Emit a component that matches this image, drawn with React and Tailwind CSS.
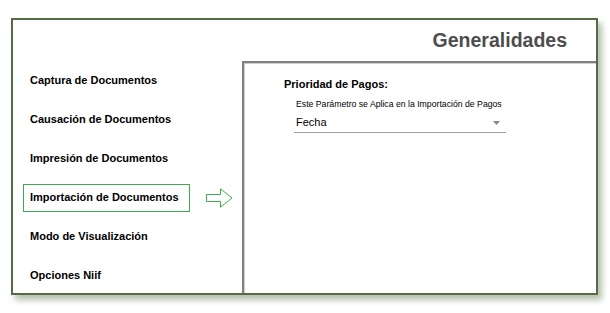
import React from "react";

const items = [
  "Captura de Documentos",
  "Causación de Documentos",
  "Impresión de Documentos",
  "Importación de Documentos",
  "Modo de Visualización",
  "Opciones Niif",
];

export default function App() {
  return (
    <div className="w-[610px] h-[313px] bg-white pt-[18px] pl-[11px]" style={{ fontFamily: '"Liberation Sans", Arial, sans-serif' }}>
      <div className="w-[587px] h-[277px] border-2 border-[#566b44] bg-white shadow-[4px_5px_6px_rgba(90,120,70,0.45)] flex flex-col overflow-visible">
        <div className="h-[41px] shrink-0 flex items-center justify-end pr-[29px] pt-[1px]">
          <span className="text-[19.5px] font-bold text-[#4d4d4d] leading-none">Generalidades</span>
        </div>
        <div className="flex flex-1 min-h-0">
          <div className="w-[229px] flex flex-col overflow-hidden">
            {items.map((t, i) => (
              <div key={t} className="h-[39px] shrink-0 flex items-center relative">
                {i === 3 ? (
                  <>
                    <div className="ml-[10px] w-[167px] h-[28px] border border-[#3dae4f] flex items-center pl-[6px]">
                      <span className="text-[11px] font-bold text-black whitespace-nowrap">{t}</span>
                    </div>
                    <svg className="ml-[16px]" width="27" height="20" viewBox="0 0 27 20">
                      <path d="M0.5 6.5 H14.5 V0.8 L26 10 L14.5 19.2 V13.5 H0.5 Z" fill="none" stroke="#3dae4f" strokeWidth="1" />
                    </svg>
                  </>
                ) : (
                  <span className="ml-[17px] text-[11px] font-bold text-black whitespace-nowrap">{t}</span>
                )}
              </div>
            ))}
          </div>
          <div className="flex-1 border-l-2 border-t-2 border-[#808080] shadow-[inset_1px_1px_0_#d0d0d0] pl-[40px] pt-[14px]">
            <div className="text-[11px] font-bold text-black leading-[14px]">Prioridad de Pagos:</div>
            <div className="pl-[12px] mt-[7px] text-[8.7px] text-black leading-[12px] whitespace-nowrap">Este Parámetro se Aplica en la Importación de Pagos</div>
            <div className="ml-[10px] mt-[3px] w-[212px] h-[20px] border-b border-[#a0a0a0] flex items-center justify-between pl-[2px] pr-[6px]">
              <span className="text-[11px] text-black">Fecha</span>
              <svg width="7" height="4" viewBox="0 0 7 4"><path d="M0 0 H7 L3.5 4 Z" fill="#888" /></svg>
            </div>
          </div>
        </div>
      </div>
    </div>
  );
}
